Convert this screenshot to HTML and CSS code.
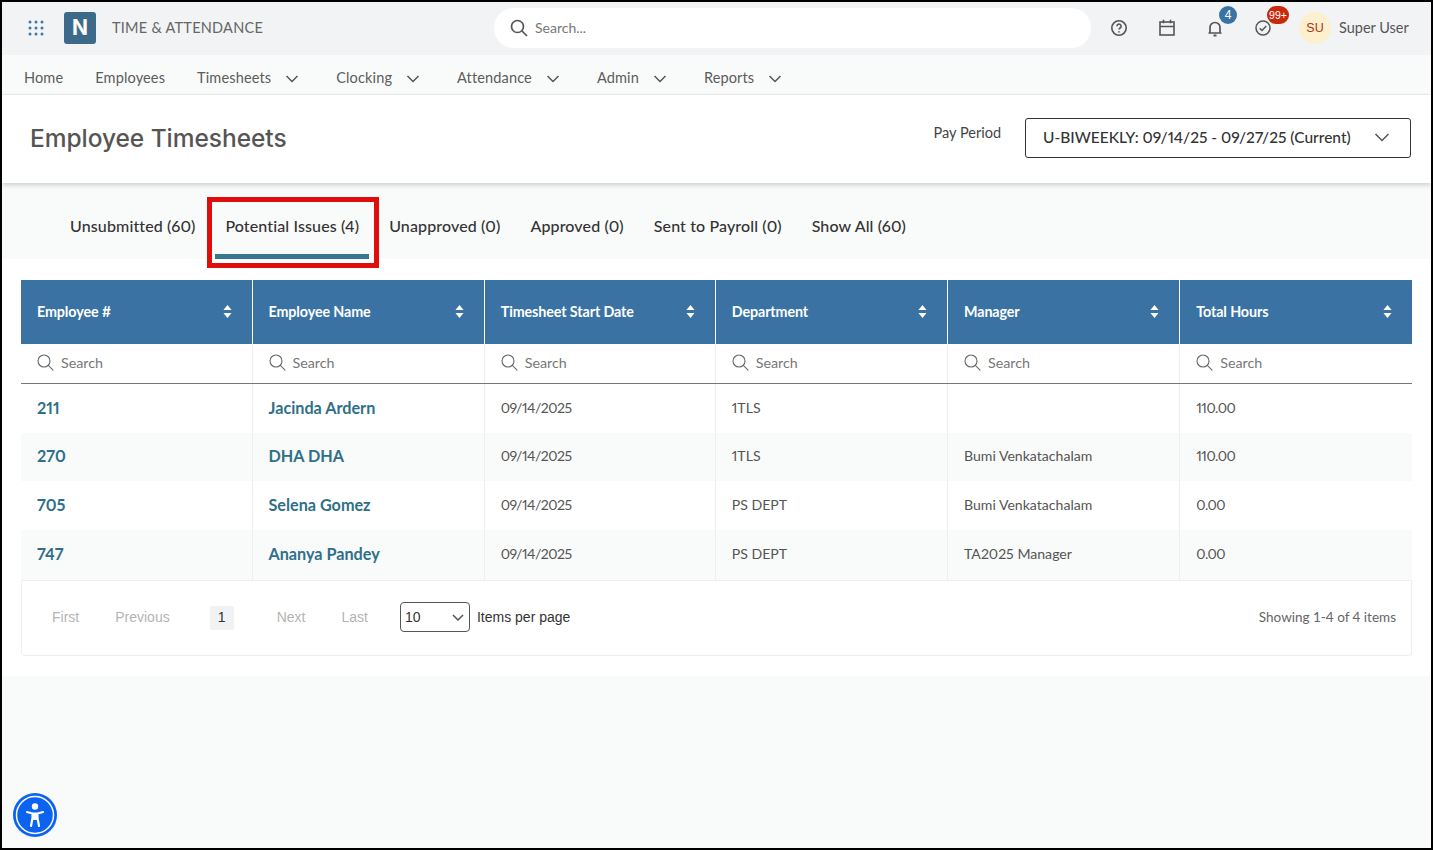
FILE: index.html
```html
<!DOCTYPE html>
<html lang="en">
<head>
<meta charset="utf-8">
<title>Employee Timesheets</title>
<link rel="stylesheet" href="styles.css">
</head>
<body>
<div class="frame">
  <header class="topbar">
    <div class="brand">
      <svg class="apps" width="16" height="16" viewBox="0 0 16 16"><g fill="#3a7ca5"><circle cx="2" cy="2" r="1.5"/><circle cx="8" cy="2" r="1.5"/><circle cx="14" cy="2" r="1.5"/><circle cx="2" cy="8" r="1.5"/><circle cx="8" cy="8" r="1.5"/><circle cx="14" cy="8" r="1.5"/><circle cx="2" cy="14" r="1.5"/><circle cx="8" cy="14" r="1.5"/><circle cx="14" cy="14" r="1.5"/></g></svg>
      <span class="logo">N</span>
      <span class="product">TIME &amp; ATTENDANCE</span>
    </div>
    <div class="globalsearch">
      <svg width="20" height="20" viewBox="0 0 20 20" fill="none" stroke="#555" stroke-width="1.7"><circle cx="8.5" cy="8.5" r="6"/><path d="M13 13l5 5"/></svg>
      <span>Search...</span>
    </div>
    <div class="tools">
      <span class="tool"><svg width="18" height="18" viewBox="0 0 18 18" fill="none" stroke="#555" stroke-width="1.6"><circle cx="9" cy="9" r="7.2"/><path d="M6.9 7.2a2.1 2.1 0 1 1 3.2 1.8c-.8.5-1.1.9-1.1 1.6"/><path d="M9 12.2v1.3"/></svg></span>
      <span class="tool"><svg width="18" height="18" viewBox="0 0 18 18" fill="none" stroke="#555" stroke-width="1.6"><rect x="2" y="3" width="14" height="13"/><path d="M2 7.5h14M5.5 .8v3.4M12.5 .8v3.4"/></svg></span>
      <span class="tool"><svg width="18" height="18" viewBox="0 0 18 18" fill="none" stroke="#555" stroke-width="1.7"><path d="M2.500 14h13M4 14V8.500a5 5 0 0 1 10 0V14"/><path d="M7.500 16.500h3" stroke-width="2"/></svg><b class="badge blue">4</b></span>
      <span class="tool"><svg width="18" height="18" viewBox="0 0 18 18" fill="none" stroke="#555" stroke-width="1.5"><circle cx="9" cy="9" r="7"/><path d="M5.700 9.200l2.300 2.300 4.300-4.500"/></svg><b class="badge red">99+</b></span>
      <span class="avatar">SU</span>
      <span class="username">Super User</span>
    </div>
  </header>

  <nav class="mainnav">
    <a>Home</a>
    <a>Employees</a>
    <a class="drop">Timesheets<svg class="chev" width="14" height="8" viewBox="0 0 14 8"><path d="M1.500 1l5.500 5.500L12.500 1"/></svg></a>
    <a class="drop">Clocking<svg class="chev" width="14" height="8" viewBox="0 0 14 8"><path d="M1.500 1l5.500 5.500L12.500 1"/></svg></a>
    <a class="drop">Attendance<svg class="chev" width="14" height="8" viewBox="0 0 14 8"><path d="M1.500 1l5.500 5.500L12.500 1"/></svg></a>
    <a class="drop">Admin<svg class="chev" width="14" height="8" viewBox="0 0 14 8"><path d="M1.500 1l5.500 5.500L12.500 1"/></svg></a>
    <a class="drop">Reports<svg class="chev" width="14" height="8" viewBox="0 0 14 8"><path d="M1.500 1l5.500 5.500L12.500 1"/></svg></a>
  </nav>

  <section class="pagehead">
    <h1>Employee Timesheets</h1>
    <div class="period">
      <span class="periodlabel">Pay Period</span>
      <div class="periodselect">
        <span>U-BIWEEKLY: 09/14/25 - 09/27/25 (Current)</span>
        <svg class="chev" width="16" height="9" viewBox="0 0 16 9"><path d="M1.500 1l6.500 6.500L14.500 1"/></svg>
      </div>
    </div>
  </section>

  <div class="tabs">
    <a class="tab">Unsubmitted (60)</a>
    <a class="tab active">Potential Issues (4)</a>
    <a class="tab">Unapproved (0)</a>
    <a class="tab">Approved (0)</a>
    <a class="tab">Sent to Payroll (0)</a>
    <a class="tab">Show All (60)</a>
  </div>

  <main class="content">
    <table class="grid">
      <thead>
        <tr class="heads">
          <th><div class="th">Employee #<svg class="sort" width="9" height="13" viewBox="0 0 10 13" preserveAspectRatio="none"><path d="M5 0l4.500 5h-9zM5 13L.5 8h9z"/></svg></div></th>
          <th><div class="th">Employee Name<svg class="sort" width="9" height="13" viewBox="0 0 10 13" preserveAspectRatio="none"><path d="M5 0l4.500 5h-9zM5 13L.5 8h9z"/></svg></div></th>
          <th><div class="th">Timesheet Start Date<svg class="sort" width="9" height="13" viewBox="0 0 10 13" preserveAspectRatio="none"><path d="M5 0l4.500 5h-9zM5 13L.5 8h9z"/></svg></div></th>
          <th><div class="th">Department<svg class="sort" width="9" height="13" viewBox="0 0 10 13" preserveAspectRatio="none"><path d="M5 0l4.500 5h-9zM5 13L.5 8h9z"/></svg></div></th>
          <th><div class="th">Manager<svg class="sort" width="9" height="13" viewBox="0 0 10 13" preserveAspectRatio="none"><path d="M5 0l4.500 5h-9zM5 13L.5 8h9z"/></svg></div></th>
          <th><div class="th">Total Hours<svg class="sort" width="9" height="13" viewBox="0 0 10 13" preserveAspectRatio="none"><path d="M5 0l4.500 5h-9zM5 13L.5 8h9z"/></svg></div></th>
        </tr>
        <tr class="filters">
          <td><div class="filter"><svg width="17" height="17" viewBox="0 0 17 17" fill="none" stroke="#666" stroke-width="1.100"><circle cx="7" cy="7" r="6"/><path d="M11.300 11.300l5 5"/></svg>Search</div></td>
          <td><div class="filter"><svg width="17" height="17" viewBox="0 0 17 17" fill="none" stroke="#666" stroke-width="1.100"><circle cx="7" cy="7" r="6"/><path d="M11.300 11.300l5 5"/></svg>Search</div></td>
          <td><div class="filter"><svg width="17" height="17" viewBox="0 0 17 17" fill="none" stroke="#666" stroke-width="1.100"><circle cx="7" cy="7" r="6"/><path d="M11.300 11.300l5 5"/></svg>Search</div></td>
          <td><div class="filter"><svg width="17" height="17" viewBox="0 0 17 17" fill="none" stroke="#666" stroke-width="1.100"><circle cx="7" cy="7" r="6"/><path d="M11.300 11.300l5 5"/></svg>Search</div></td>
          <td><div class="filter"><svg width="17" height="17" viewBox="0 0 17 17" fill="none" stroke="#666" stroke-width="1.100"><circle cx="7" cy="7" r="6"/><path d="M11.300 11.300l5 5"/></svg>Search</div></td>
          <td><div class="filter"><svg width="17" height="17" viewBox="0 0 17 17" fill="none" stroke="#666" stroke-width="1.100"><circle cx="7" cy="7" r="6"/><path d="M11.300 11.300l5 5"/></svg>Search</div></td>
        </tr>
      </thead>
      <tbody>
        <tr class="r1"><td class="link">211</td><td class="link">Jacinda Ardern</td><td class="num">09/14/2025</td><td>1TLS</td><td></td><td class="num">110.00</td></tr>
        <tr class="r2 alt"><td class="link">270</td><td class="link">DHA DHA</td><td class="num">09/14/2025</td><td>1TLS</td><td>Bumi Venkatachalam</td><td class="num">110.00</td></tr>
        <tr class="r3"><td class="link">705</td><td class="link">Selena Gomez</td><td class="num">09/14/2025</td><td>PS DEPT</td><td>Bumi Venkatachalam</td><td class="num">0.00</td></tr>
        <tr class="r4 alt"><td class="link">747</td><td class="link">Ananya Pandey</td><td class="num">09/14/2025</td><td>PS DEPT</td><td>TA2025 Manager</td><td class="num">0.00</td></tr>
      </tbody>
    </table>
    <div class="pager">
      <span class="pg first">First</span>
      <span class="pg prev">Previous</span>
      <span class="current">1</span>
      <span class="pg next">Next</span>
      <span class="pg last">Last</span>
      <div class="pagesize">10<svg class="chev" width="12" height="7" viewBox="0 0 12 7"><path d="M1 1l5 5 5-5"/></svg></div>
      <span class="perpage">Items per page</span>
      <span class="showing">Showing 1-4 of 4 items</span>
    </div>
  </main>

  <div class="access">
    <svg width="44" height="44" viewBox="0 0 44 44"><circle cx="22" cy="22" r="22" fill="#0b63f0"/><circle cx="22" cy="22" r="18.500" fill="none" stroke="#fff" stroke-width="1.500"/><circle cx="22" cy="13.500" r="3.200" fill="#fff"/><path d="M14 19l5.500 1.500h5L30 19M19.500 20.500V25L18 33M24.500 20.500V25L26 33" fill="none" stroke="#fff" stroke-width="2.200" stroke-linecap="round" stroke-linejoin="round"/><path d="M20 20.500h4V27h-4z" fill="#fff"/></svg>
  </div>
</div>
</body>
</html>
```
FILE: styles.css
```css
* { box-sizing: border-box; }
html, body { margin: 0; height: 100%; }
body { font-family: Lato, "Liberation Sans", sans-serif; font-variant-numeric: proportional-nums; color: #555; overflow: hidden; }
.frame { position: relative; width: 1433px; height: 850px; border: 2px solid #000; background: #f9fafa; display: flex; flex-direction: column; }

.topbar { height: 53px; padding-bottom: 2px; background: #f1f3f5; display: flex; align-items: center; position: relative; }
.brand { display: flex; align-items: center; width: 492px; padding-left: 26px; }
.apps { flex: none; }
.logo { width: 32px; height: 32px; margin-left: 20px; border-radius: 3px; background: #3d6a8a; color: #fff; font: 700 21px/32px "Inter", sans-serif; text-align: center; }
.product { margin-left: 16px; font-size: 14.500px; letter-spacing: .25px; color: #666; }
.globalsearch { width: 597px; height: 40px; border-radius: 20px; background: #fff; display: flex; align-items: center; gap: 6px; padding-left: 15px; font-size: 14px; color: #777; }
.tools { flex: 1; display: flex; align-items: center; padding-left: 19px; }
.tool { position: relative; width: 18px; height: 18px; margin-right: 30px; display: block; }
.tool svg { display: block; }
.badge { position: absolute; font: 400 11px/18px "Liberation Sans", sans-serif; color: #fff; text-align: center; height: 18px; border-radius: 9px; }
.badge.blue { background: #3a73a3; width: 18px; left: 13px; top: -13px; font-size: 12px; }
.badge.red { background: #c8290a; width: 22px; left: 13px; top: -13px; font-size: 10.500px; }
.avatar { width: 32px; height: 32px; margin-left: -3px; border-radius: 50%; background: #fdf0cf; color: #b3300f; font: 400 12.500px/32px "Liberation Sans", sans-serif; text-align: center; }
.username { margin-left: 8px; font-size: 14.500px; color: #555; }

.mainnav { height: 40px; padding: 6px 0 0 22px; display: flex; align-items: center; gap: 32px; font-size: 14.550px; letter-spacing: .12px; color: #5d5d5d; border-bottom: 1px solid #eee; }
.mainnav a { display: flex; align-items: center; }
.mainnav .drop { margin-right: 5px; }
.mainnav .chev { margin-left: 14px; margin-top: 3px; }
.chev { fill: none; stroke: #555; stroke-width: 1.500; flex: none; }

.pagehead { height: 88px; padding: 0 20px 2px 28px; background: #fff; box-shadow: 0 2px 5px rgba(0,0,0,.18); display: flex; align-items: center; justify-content: space-between; position: relative; }
h1 { margin: 0; font: 500 24.500px/32px "Inter", sans-serif; color: #555; letter-spacing: -.05px; }
.period { display: flex; align-items: flex-start; gap: 24px; }
.periodlabel { font-size: 14.500px; line-height: 18px; margin-top: 6px; color: #444; }
.periodselect { width: 386px; height: 40px; padding: 0 20px 2px 17px; border: 1px solid #333; border-radius: 3px; display: flex; align-items: center; justify-content: space-between; font-size: 15.500px; font-weight: 500; color: #333; }

.tabs { height: 76px; display: flex; align-items: center; padding: 0 0 0 53px; }
.tab { height: 76px; padding: 0 15px; line-height: 85px; font-size: 16px; font-weight: 500; letter-spacing: .13px; color: #333; position: relative; white-space: nowrap; }
.tab.active::before { content: ""; position: absolute; left: -3px; right: -5px; top: 14px; bottom: -9px; border: 5px solid #e00d0d; pointer-events: none; z-index: 2; }
.tab.active::after { content: ""; position: absolute; left: 5px; right: 5px; bottom: 0; height: 5px; background: #36788f; }

.content { height: 417px; background: #fff; padding: 21px 19px 0; }
.grid { width: 1391px; border-collapse: collapse; table-layout: fixed; }
.heads th { height: 64px; padding: 0; background: #3a73a3; border-right: 1px solid #fff; text-align: left; }
.heads th:nth-child(1), .heads th:nth-child(3) { width: 231px; }
.heads th:last-child { border-right: 0; }
.th { display: flex; align-items: center; justify-content: space-between; padding: 0 20px 2px 16px; font-size: 14.300px; font-weight: 700; color: #fff; letter-spacing: -.1px; }
.sort { fill: #fff; flex: none; }
.filters td { height: 39px; padding: 0 16px 2px; border-bottom: 1px solid #777; border-right: 1px solid #eceeef; font-size: 14.300px; color: #777; }
.filter { display: flex; align-items: center; gap: 7px; }
.filters td:last-child, tbody td:last-child { border-right: 0; }
tbody td { padding: 0 16px 2px; border-right: 1px solid #eceeef; font-size: 14.100px; color: #555; }
tbody td.num { letter-spacing: -.5px; }
.r1 td { height: 50px; }
.r2 td { height: 48px; padding-bottom: 3px; }
.r3 td { height: 49px; }
.r4 td { height: 50px; padding-bottom: 3px; }
.alt td { background: #f9fafa; }
tbody td.link { color: #2f7088; font-size: 16.200px; font-weight: 700; }

.pager { height: 76px; border: 1px solid #eceeef; border-radius: 0 0 4px 4px; display: flex; align-items: center; padding: 0 15px 0 30px; font: 14px "Liberation Sans", sans-serif; color: #333; }
.pg { color: #b4b4b4; margin-bottom: 2px; }
.prev { margin-left: 36px; }
.current { width: 24px; height: 24px; margin-left: 40px; border-radius: 2px; background: #f0f2f3; color: #333; line-height: 23px; text-align: center; }
.next { margin-left: 43px; }
.last { margin-left: 36px; }
.pagesize { width: 70px; height: 30px; margin: 0 0 2px 32px; border: 1px solid #555; border-radius: 4px; display: flex; align-items: center; justify-content: space-between; padding: 0 5px 0 4px; }
.perpage { margin: 0 0 2px 7px; }
.showing { margin: 0 0 3px auto; font: 13.500px Lato, sans-serif; color: #666; }

.access { position: absolute; left: 11px; top: 791px; width: 44px; height: 44px; }
.access svg { display: block; }
```
